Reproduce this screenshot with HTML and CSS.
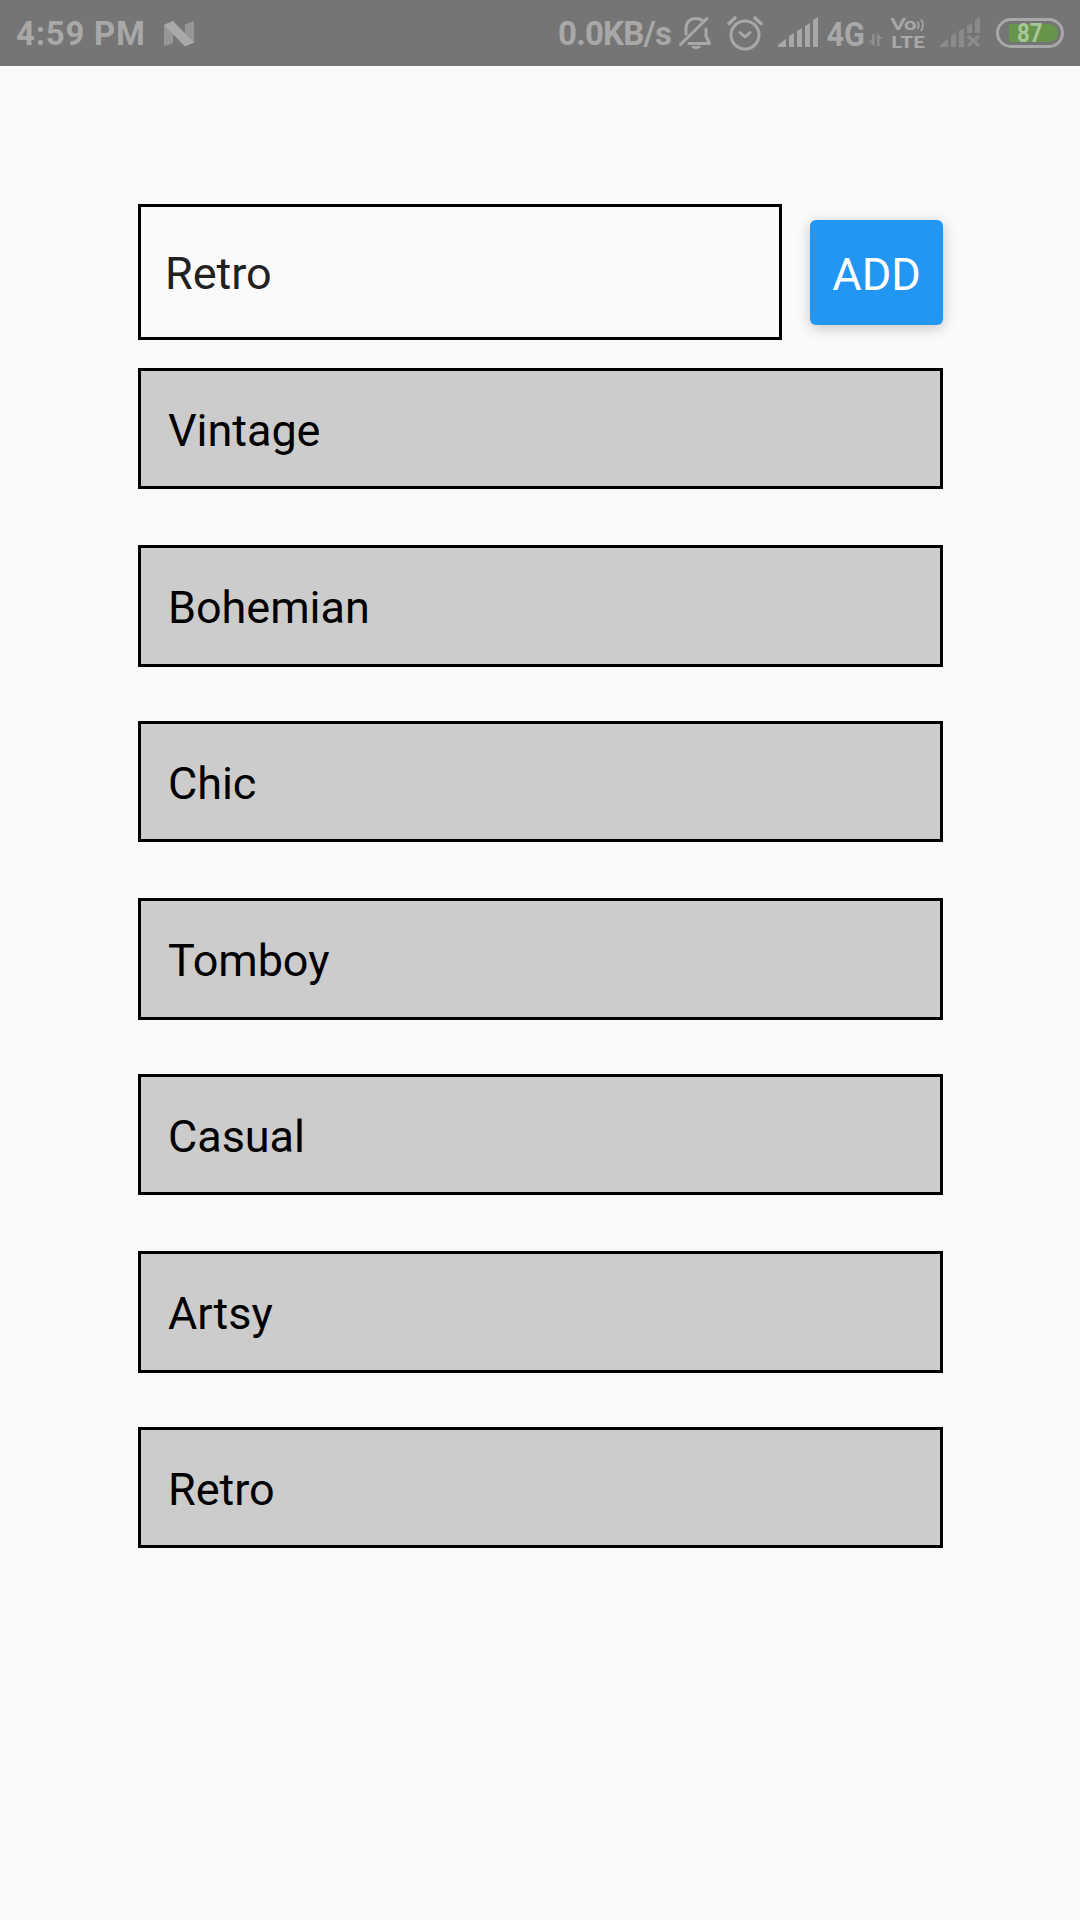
FILE: index.html
```html
<!DOCTYPE html>
<html lang="en">
<head>
<meta charset="utf-8">
<title>Styles</title>
<link rel="stylesheet" href="styles.css">
</head>
<body>
<header class="status">
  <span class="time">4:59 PM</span>
  <svg class="nougat" width="32" height="26" viewBox="0 0 32 26"><path fill="#969696" d="M1 4 10 0V22L1 25.500ZM22 3.500 31 0V22L22 24Z"/><path fill="#aaa" d="M1 4 10 0 31 21.500 22 25.500Z"/></svg>
  <span class="speed">0.0KB/s</span>
  <svg class="tray" width="408" height="66" viewBox="672 0 408 66">
    <g fill="none" stroke="#a8a8a8" stroke-width="3" stroke-linecap="round" stroke-linejoin="round">
      <path d="M680.500 44.500 707 18.500M686 34V29C686 22 690 18.500 696 18.500Q700 18.500 702.500 20.500M706 29V36L709.500 43.500H689"/>
      <circle cx="745" cy="35" r="14"/>
      <path d="M740 32.500 745 37 750 32.500"/>
      <path stroke-width="3.600" d="M729 23.500 735 18M761 23.500 755 18"/>
    </g>
    <path fill="#a8a8a8" d="M691 46H701Q700 49 696 49T691 46Z"/>
    <path fill="#a8a8a8" d="M778 45 786 39V47H778ZM789 36 794 33V47H789ZM797 31 802 28V47H797ZM805 26 810 23V47H805ZM813 20 818 17V47H813Z"/>
    <text class="net" x="826.500" y="45.500" textLength="38.500" lengthAdjust="spacingAndGlyphs">4G</text>
    <path fill="#8f8f8f" d="M872 34H874.500V46.500L868.500 40.500H872ZM877 46V33L882.500 39H879.500V46Z"/>
    <text class="volte" x="890.500" y="30" textLength="26" lengthAdjust="spacingAndGlyphs">Vo</text>
    <path fill="none" stroke="#a8a8a8" stroke-width="1.700" d="M917.500 21.500Q920 25 917.500 29M921 19.500Q925 25 921 31"/>
    <text class="volte" x="891" y="48" textLength="34" lengthAdjust="spacingAndGlyphs">LTE</text>
    <path fill="#8b8b8b" d="M940 45 948 39V47H940ZM951 36 956 33V47H951ZM959 31 964 28V47H959ZM967 26 972 23V33H967ZM975 20 980 17V33H975Z"/>
    <path stroke="#8b8b8b" stroke-width="3.500" d="M968 36 979 46M979 36 968 46"/>
    <rect x="997.500" y="19.500" width="65" height="27" rx="13.500" fill="none" stroke="#a8a8a8" stroke-width="3"/>
    <path fill="#67954b" d="M1011 24H1049Q1058 25 1058 33T1049 42H1011Q1009 42 1009 40V26Q1009 24 1011 24Z"/>
    <text class="battery" x="1017" y="42" textLength="25.500" lengthAdjust="spacingAndGlyphs">87</text>
  </svg>
</header>
<main class="page">
  <form class="entry">
    <input class="field" type="text" value="Retro" aria-label="Style">
    <button class="add" type="button">ADD</button>
  </form>
  <ul class="list">
    <li class="item">Vintage</li>
    <li class="item">Bohemian</li>
    <li class="item">Chic</li>
    <li class="item">Tomboy</li>
    <li class="item">Casual</li>
    <li class="item">Artsy</li>
    <li class="item">Retro</li>
  </ul>
</main>
</body>
</html>
```
FILE: styles.css
```css
* { box-sizing: border-box; }
body { margin: 0; min-height: 1920px; background: #fafafa; color: #000; font-family: Roboto, sans-serif; }
.status { display: flex; height: 66px; background: #757575; color: #a8a8a8; font-size: 33px; font-weight: 700; line-height: 38px; }
.time { width: 147px; padding: 15px 0 0 16px; letter-spacing: .75px; white-space: nowrap; }
.nougat { margin: 20.500px 0 0 16px; }
.speed { width: 114px; margin: 15px 0 0 363px; letter-spacing: -.8px; white-space: nowrap; }
.tray { display: block; flex: none; }
.net { font-size: 33px; font-weight: 700; fill: #a8a8a8; }
.volte { font-family: Lato, sans-serif; font-size: 17.500px; font-weight: 900; fill: #a8a8a8; }
.battery { font-size: 25px; font-weight: 700; fill: #a9c69a; }
.page { padding: 138px 137px 0 138px; }
.entry { display: flex; align-items: flex-start; gap: 28px; margin: 0; }
.field { width: 644px; height: 136px; margin: 0; padding: 3px 24px 0; border: 3px solid #000; border-radius: 0; outline: 0; background: #fafafa; color: #212121; font: 400 45px/53px Roboto, sans-serif; }
.add { width: 133px; height: 105px; margin: 16px 0 0; padding: 4px 0 0; border: 0; border-radius: 6px; background: #2196f3; color: #fff; font: 400 45px/53px Roboto, sans-serif; box-shadow: 0 3px 14px rgba(0, 0, 0, .22); }
.list { display: flex; flex-direction: column; gap: 55px; margin: 28px 0 0; padding: 0; list-style: none; }
.item { height: 121px; padding: 33px 27px 0; border: 3px solid #000; background: #ccc; font-size: 45px; line-height: 53px; letter-spacing: -.05px; }
.item:nth-child(even) { height: 122px; margin-bottom: -1px; }
.item:nth-child(odd):not(:last-child) { margin-bottom: 1px; }
```
